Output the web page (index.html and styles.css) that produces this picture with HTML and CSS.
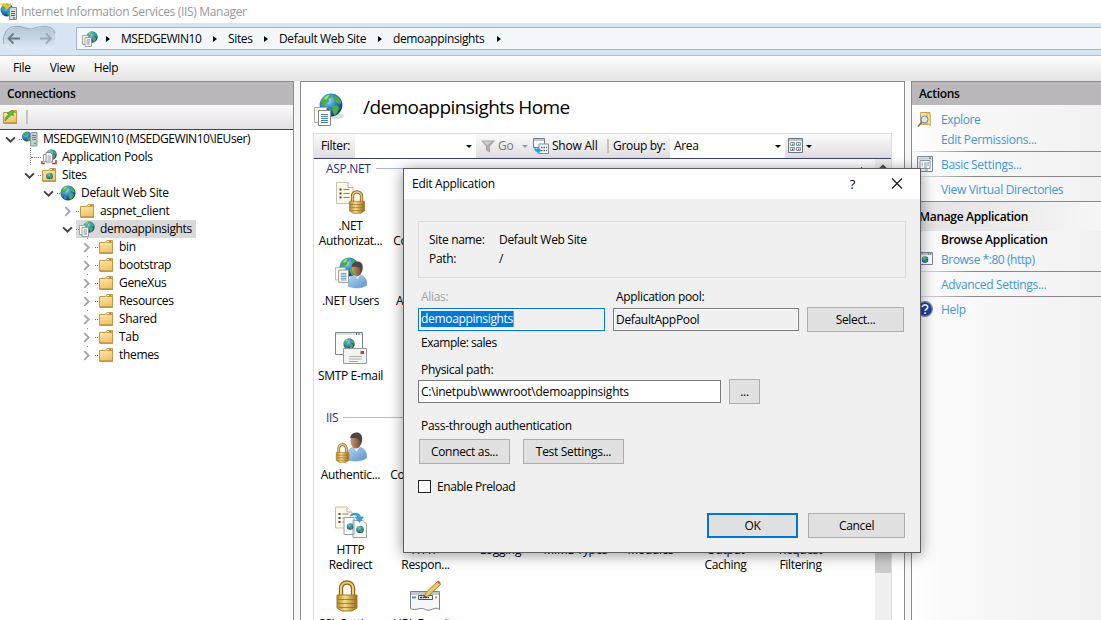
FILE: index.html
```html
<!DOCTYPE html>
<html lang="en">
<head>
<meta charset="utf-8">
<title>Internet Information Services (IIS) Manager</title>
<link rel="stylesheet" href="styles.css">
</head>
<body>
<svg class="sprite" width="0" height="0">
  <defs>
    <radialGradient id="gGlobe" cx=".38" cy=".3" r=".75"><stop offset="0" stop-color="#9fdcff"/><stop offset=".45" stop-color="#2f86d6"/><stop offset="1" stop-color="#0a2f86"/></radialGradient>
    <linearGradient id="gFolder" x1="0" y1="0" x2=".3" y2="1"><stop offset="0" stop-color="#ffeeb0"/><stop offset="1" stop-color="#efc468"/></linearGradient>
    <linearGradient id="gGold" x1="0" y1="0" x2="1" y2="0"><stop offset="0" stop-color="#b5852a"/><stop offset=".4" stop-color="#f8dc8a"/><stop offset="1" stop-color="#9a6c17"/></linearGradient>
    <linearGradient id="gShirt" x1="0" y1="0" x2="1" y2="1"><stop offset="0" stop-color="#b9d8f2"/><stop offset="1" stop-color="#5a92c8"/></linearGradient>
    <linearGradient id="gFace" x1="0" y1="0" x2="1" y2="0"><stop offset="0" stop-color="#c99a72"/><stop offset="1" stop-color="#6b452c"/></linearGradient>
    <linearGradient id="gNav" x1="0" y1="0" x2="0" y2="1"><stop offset="0" stop-color="#b5c5d8"/><stop offset=".55" stop-color="#c9d7e6"/><stop offset="1" stop-color="#e2ebf5"/></linearGradient>
  </defs>
  <symbol id="globe" viewBox="0 0 16 16">
    <circle cx="8" cy="8" r="7.6" fill="url(#gGlobe)"/>
    <path d="M2 4.5C3.6 2 6 .8 7.6 1l.8 1.6-2 1.2.4 1.8-2.2 1.6-.6 2L2 8.6C1.300 7 1.500 5.500 2 4.500zM10 2l2.500.6 2.200 3-.2 1.600-2.400-.4-1.700-1.800zM8.600 8.600l3.400-.4 1.800 1.600-1.600 3.400-2 1.800-1.300-3.200zM3.200 11l2.300.9 1 2.700-1.500-.4z" fill="#4cae3c"/>
    <path d="M3 4C4.500 2 6 1.300 7 1.400L5 4.500z" fill="#b8e6a0" opacity=".8"/>
  </symbol>
  <symbol id="pages" viewBox="0 0 10 12">
    <path d="M.5.500h6v9h-6z" fill="#fffdf2" stroke="#a5a59a"/>
    <path d="M3 2.500h6.500v9H3z" fill="#fff" stroke="#858585" stroke-width=".8"/>
    <path d="M4.500 5h3.500M4.500 7h3.500M4.500 9h3.500" stroke="#5585b5" stroke-width=".9"/>
  </symbol>
  <symbol id="bigpages" viewBox="0 0 17 19">
    <path d="M.5.500h12v15H.5z" fill="#fffdf2" stroke="#aaa99c"/>
    <path d="M4.500 3.500h12v15h-12z" fill="#fff" stroke="#858585"/>
    <path d="M7 7.500h7M7 9.500h7M7 11.500h7M7 13.500h7M7 15.500h7" stroke="#4a80b8"/>
  </symbol>
  <symbol id="app" viewBox="0 0 16 16"><use href="#globe" x="4" y="0" width="12" height="12"/><use href="#pages" x="0" y="4" width="10" height="12"/></symbol>
  <symbol id="folder" viewBox="0 0 16 16">
    <path d="M1.500 3.500h6l1.500-2h5.500v12.500h-13z" fill="url(#gFolder)" stroke="#c2994c"/>
    <path d="M8.500 3.500h6" stroke="#c2994c"/><path d="M9.500 2.500h4" stroke="#fff"/><path d="M11 2.500h2.500" stroke="#4d9be0"/>
    <path d="M1.500 14.200h13.500" stroke="#a8823a"/>
  </symbol>
  <symbol id="server" viewBox="0 0 16 16">
    <circle cx="5" cy="5.500" r="5" fill="url(#gGlobe)"/><path d="M1 4l3-3.300L6.500 2 4 5.500zM5 7l3-1 0 3-2 1.300z" fill="#43ad3b"/>
    <path d="M8.500 2.500l1.500-1h5v13.500h-6.500z" fill="#c9ced3" stroke="#8f969c"/><path d="M10 4.500h4M10 6.500h4M10 8.500h4" stroke="#6e787f"/><path d="M12 12.500h2.200" stroke="#20d020" stroke-width="1.500"/>
  </symbol>
  <symbol id="iis" viewBox="0 0 18 18">
    <circle cx="7" cy="7" r="6.500" fill="url(#gGlobe)"/><path d="M2 4l3-3 3 1-2 3-3 3zM7 9l4-2-1 5-2 1z" fill="#43b03b"/><path d="M0 1l4-1 3 2 4-2v3l-4 3-4-3z" fill="#f2c31c"/>
    <path d="M9.500 5.500l2-1h5v12h-7z" fill="#d8dbde" stroke="#858c92"/><path d="M11 8.500h4M11 10.500h4M11 12.500h4" stroke="#59646c"/><path d="M13 15h2" stroke="#20c020" stroke-width="1.500"/>
  </symbol>
  <symbol id="pools" viewBox="0 0 16 16">
    <use href="#globe" x="5" y="0" width="11" height="11"/>
    <path d="M1 12v2.500h3M15 11v3.500h-4" stroke="#c33a2c" stroke-width="1.500" fill="none"/>
    <path d="M2.500 5.500h5v7h-5z" fill="#fff" stroke="#999"/><path d="M5 3.500h4.500l2 2v7.500H5z" fill="#fff" stroke="#888"/><path d="M6.500 7h3.500M6.500 9h3.500M6.500 11h3.500" stroke="#7b93ad"/>
  </symbol>
  <symbol id="sites" viewBox="0 0 16 16"><use href="#folder" width="16" height="16"/><use href="#globe" x="5" y="5.500" width="7" height="7"/></symbol>
  <symbol id="open" viewBox="0 0 16 16"><use href="#folder" width="16" height="16"/><path d="M3 12C3 8 5 6.500 7 6L5 4 10.500 1.500 11.500 6.500 9.500 6 C7 8 6 9 3 12z" fill="#57c33a" stroke="#2f8c1c" stroke-width=".6"/></symbol>
  <symbol id="find" viewBox="0 0 16 16"><path d="M3.500 1.500h9.500v12h-9.500z" fill="url(#gFolder)" stroke="#c9a258"/><path d="M10 1l3.500 3v11L10 12z" fill="#f8dc8c" stroke="#c9a258" stroke-width=".7"/><path d="M5 11L1 15.500" stroke="#85776c" stroke-width="1.800"/><circle cx="7.500" cy="8.500" r="3.500" fill="#d5ebfb" stroke="#76858f"/></symbol>
  <symbol id="settings" viewBox="0 0 16 16"><path d="M.5.500h15v15H.5z" fill="#f4f6f7" stroke="#7e868e"/><path d="M1 2.500h14" stroke="#c5ccd3" stroke-width="2"/><path d="M12 2h2" stroke="#667"/><path d="M3 4.500h10v8H3z" fill="#fff" stroke="#8998a6"/><path d="M4.500 7h1.500M4.500 9h1.500M7 7h5M7 9h5M7 11h3" stroke="#8aa0b3"/><path d="M8 14h3" stroke="#34b9e5"/></symbol>
  <symbol id="browse" viewBox="0 0 16 16"><path d="M.5 1.500h15v12H.5z" fill="#fff" stroke="#7e868e"/><path d="M1 3h14" stroke="#c5ccd3" stroke-width="2"/><path d="M11 3h1M13 3h1" stroke="#446"/><use href="#globe" x="4.500" y="5" width="7" height="7"/></symbol>
  <symbol id="help" viewBox="0 0 16 16"><circle cx="8" cy="8" r="7.400" fill="#1e43a8" stroke="#8d9199" stroke-width="1.200"/><path d="M5.300 6.300C5.300 3 10.800 3 10.700 6.300 10.700 8 8.200 8 8.100 10" fill="none" stroke="#fff" stroke-width="1.700"/><path d="M8.100 11.300v1.800" stroke="#fff" stroke-width="1.800"/></symbol>
  <symbol id="lock" viewBox="0 0 24 32" preserveAspectRatio="xMinYMin meet">
    <path d="M6 17V8.500C6 .500 18 .500 18 8.500v8.500" fill="none" stroke="#8d651a" stroke-width="4.400"/><path d="M6 17V8.500C6 .500 18 .500 18 8.500v8.500" fill="none" stroke="#efcf77" stroke-width="2"/>
    <path d="M2 15h20v13l-5 3H7l-5-3z" fill="url(#gGold)" stroke="#a37a2a"/><path d="M3 19.500h18M3 23.500h18M4 27.500h16" stroke="#93691d" stroke-width="1.200" opacity=".75"/>
  </symbol>
  <symbol id="list" viewBox="0 0 18 22"><path d="M.5.500h11.500l5 5v16H.5z" fill="#fdf9e4" stroke="#c6c2b0"/><path d="M12 .500v5h5" fill="#fff" stroke="#b5b09c"/><path d="M3.500 7.500h2M3.500 11.500h2M3.500 15.500h2" stroke="#444" stroke-width="2"/><path d="M7.500 7.500h6M7.500 11.500h6M7.500 15.500h6" stroke="#7b7ba4"/></symbol>
  <symbol id="user" viewBox="0 0 20 30">
    <path d="M0 27C0 19 4 16 7 16h7c4 1 6 5 6 10-5 4-14 4-20 1z" fill="url(#gShirt)" stroke="#7ba2c9" stroke-width=".6"/><path d="M7 15l3 5 4-6z" fill="#eef5fb"/><ellipse cx="9.500" cy="9.500" rx="5.300" ry="7.500" fill="url(#gFace)"/><path d="M4 7C4 0 15.500-1 15.500 7c0 4-1 5-1.500 6-.5-5-3-7-10-6z" fill="#4a4643"/>
  </symbol>
  <symbol id="auth-rules" viewBox="0 0 32 32"><use href="#list" x="1" y="0" width="18" height="22"/><use href="#lock" x="13" y="8" width="18" height="24"/></symbol>
  <symbol id="net-users" viewBox="0 0 32 32"><use href="#globe" x="4" y="0" width="20" height="20"/><use href="#bigpages" x="0" y="10" width="14" height="16"/><use href="#user" x="13" y="3" width="19" height="29"/></symbol>
  <symbol id="smtp" viewBox="0 0 32 32"><path d="M.5.500h27v22H.5z" fill="#fff" stroke="#80868c"/><path d="M1 2h26" stroke="#dde2e8" stroke-width="2"/><path d="M21 2h1M23.500 2h1" stroke="#345" stroke-width="1.500"/><use href="#globe" x="8" y="6" width="12" height="12"/><path d="M8.500 16.500h23v15h-23z" fill="#f4f4f2" stroke="#999"/><path d="M14 24.500h13M14 27h13M14 29.500h9" stroke="#aaa"/><path d="M25.500 19h3.500v3h-3.500z" fill="#e23528"/></symbol>
  <symbol id="authn" viewBox="0 0 32 32"><use href="#user" x="11" y="0" width="21" height="31"/><use href="#lock" x="0" y="12" width="15" height="20"/></symbol>
  <symbol id="redirect" viewBox="0 0 32 32"><use href="#list" x="0" y="0" width="18" height="23"/><path d="M9 11.500h10v17H9zM18 14.500h10l3.500 3.500v13.500H18z" fill="#fff" stroke="#9aa0a6"/><use href="#globe" x="11.500" y="17" width="7" height="7"/><use href="#globe" x="21" y="19.500" width="8" height="8"/><path d="M15 10C17 6 25 6 25.500 11H28.500L24.500 16.500 20 11H22.500C22 8.500 18 8.500 15 10z" fill="#36a5dd" stroke="#1b79b0" stroke-width=".5"/></symbol>
  <symbol id="rewrite" viewBox="0 0 32 32"><path d="M.5 11.500h29v18c-5-4-9 3-14 0-5-3-10 2-15-1z" fill="#f5f7f8" stroke="#7b838a"/><path d="M1 13.500h28" stroke="#bfc6cc" stroke-width="3"/><path d="M8.500 15.500h14v4h-14z" fill="#fff" stroke="#555"/><path d="M10 17.500h9" stroke="#222" stroke-width="1.500" stroke-dasharray="2 .6"/><path d="M2 17.500h4" stroke="#5a8dc9" stroke-width="2"/><path d="M25 16.500h2v2h-2z" fill="#e2962b"/><path d="M14 17.500l2-5L27.500 1.500l3 3L19 15.500z" fill="#f0c75c" stroke="#8c6d2d" stroke-width=".8"/><path d="M27 2l1.500-1.500 2.500 2.500-1.500 1.500z" fill="#cc6257"/><path d="M14 17.500l.7-2 1.300 1z" fill="#333"/></symbol>
  <symbol id="funnel" viewBox="0 0 16 16"><path d="M1 2.500h14L10 8.500v6l-4-2v-4z" fill="#aaa"/><path d="M3 3.500h9l-5 4z" fill="#ccc"/></symbol>
  <symbol id="showall" viewBox="0 0 16 16"><path d="M.5.500h11v9H.5z" fill="#f7f9fb" stroke="#727f8c"/><path d="M1 2h10" stroke="#b9c7d5" stroke-width="2"/><path d="M6 6h9.500v9.500H6z" fill="#fff" stroke="#7d8b99"/><path d="M8 9.500h6M8 12.500h6" stroke="#39599a" stroke-width="1.700" stroke-dasharray="1.500 1"/><path d="M1.500 7c0 3 1 4 3 4V9l4 3.500-4 3.500v-2c-3 0-4-3-3-7z" fill="#2e9fdc"/></symbol>
  <symbol id="viewmode" viewBox="0 0 16 16"><path d="M.5.500h14v14H.5z" fill="#fff" stroke="#68737e"/><path d="M1 2h13" stroke="#b9c3cd" stroke-width="2"/><g fill="#fff" stroke="#8d979f"><path d="M2.500 4.500h4v3h-4zM8.500 4.500h4v3h-4zM2.500 9.500h4v3h-4zM8.500 9.500h4v3h-4z"/></g><path d="M4 5.500h1.500v1.500H4z" fill="#54a354"/><path d="M10 5.500h1.500v1.500H10z" fill="#3d9fd5"/><path d="M4 10.500h1.500v1.500H4z" fill="#5046c8"/><path d="M10 10.500h1.500v1.500H10z" fill="#d5604a"/></symbol>
  <symbol id="down" viewBox="0 0 10 10"><path d="M1 3l4 4 4-4" fill="none" stroke="#404040" stroke-width="1.700"/></symbol>
  <symbol id="right" viewBox="0 0 10 10"><path d="M3 1l4 4-4 4" fill="none" stroke="#a6a6a6" stroke-width="1.700"/></symbol>
</svg>

<div class="window">
  <header class="titlebar"><svg class="logo"><use href="#iis"/></svg><span>Internet Information Services (IIS) Manager</span></header>

  <div class="address">
    <svg class="navpad" viewBox="0 0 56 28"><path d="M12 1.500C20 0 23 4 28 4s9-4 17-2.500C58 4 57 24 46 25c-7 1-12-2-18-2s-11 3-18 2C-1 23-1 4 12 1.500z" fill="url(#gNav)" stroke="#dfe8f2" stroke-width="1.500"/><path d="M2 19C0 10 5 2.500 12 1.500 20 .500 23 4 28 4s9-4 17-2.500c4 .800 7 3 8 7" fill="none" stroke="#9aabc0" stroke-width="1.200"/><path d="M18 13.500H6.500m5-5l-5 5 5 5" fill="none" stroke="#6f7a86" stroke-width="1.800"/><path d="M38 13.500h11m-5-5l5 5-5 5" fill="none" stroke="#99a8b8" stroke-width="1.800"/></svg>
    <nav class="crumbs">
      <svg class="i16"><use href="#app"/></svg><i class="tri"></i>
      <span class="c1">MSEDGEWIN10</span><i class="tri"></i>
      <span class="c2">Sites</span><i class="tri"></i>
      <span class="c3">Default Web Site</span><i class="tri"></i>
      <span class="c4">demoappinsights</span><i class="tri"></i>
    </nav>
  </div>

  <nav class="menu"><span>File</span><span>View</span><span>Help</span></nav>

  <main class="body">
    <section class="left">
      <h2 class="head">Connections</h2>
      <div class="lefttools"><svg class="i16"><use href="#open"/></svg><i class="sep"></i></div>
      <ul class="tree">
        <li class="l0"><svg class="chev"><use href="#down"/></svg><i class="dots"></i><svg class="i16"><use href="#server"/></svg><span class="wide">MSEDGEWIN10 (MSEDGEWIN10\IEUser)</span></li>
        <li class="l1 branch"><i class="chev"></i><i class="dots"></i><svg class="i16"><use href="#pools"/></svg><span>Application Pools</span></li>
        <li class="l1"><svg class="chev"><use href="#down"/></svg><i class="dots"></i><svg class="i16"><use href="#sites"/></svg><span>Sites</span></li>
        <li class="l2"><svg class="chev"><use href="#down"/></svg><i class="dots"></i><svg class="i16"><use href="#globe"/></svg><span>Default Web Site</span></li>
        <li class="l3"><svg class="chev"><use href="#right"/></svg><i class="dots"></i><svg class="i16"><use href="#folder"/></svg><span>aspnet_client</span></li>
        <li class="l3"><svg class="chev"><use href="#down"/></svg><div class="picked"><i class="dots"></i><svg class="i16"><use href="#app"/></svg><span>demoappinsights</span></div></li>
        <li class="l4"><svg class="chev"><use href="#right"/></svg><i class="dots"></i><svg class="i16"><use href="#folder"/></svg><span>bin</span></li>
        <li class="l4"><svg class="chev"><use href="#right"/></svg><i class="dots"></i><svg class="i16"><use href="#folder"/></svg><span>bootstrap</span></li>
        <li class="l4"><svg class="chev"><use href="#right"/></svg><i class="dots"></i><svg class="i16"><use href="#folder"/></svg><span>GeneXus</span></li>
        <li class="l4"><svg class="chev"><use href="#right"/></svg><i class="dots"></i><svg class="i16"><use href="#folder"/></svg><span>Resources</span></li>
        <li class="l4"><svg class="chev"><use href="#right"/></svg><i class="dots"></i><svg class="i16"><use href="#folder"/></svg><span>Shared</span></li>
        <li class="l4"><svg class="chev"><use href="#right"/></svg><i class="dots"></i><svg class="i16"><use href="#folder"/></svg><span>Tab</span></li>
        <li class="l4"><svg class="chev"><use href="#right"/></svg><i class="dots"></i><svg class="i16"><use href="#folder"/></svg><span>themes</span></li>
      </ul>
    </section>

    <section class="center">
      <div class="home"><svg viewBox="0 0 32 34"><ellipse cx="21" cy="23" rx="9" ry="3" fill="#ddd"/><use href="#globe" x="5" y="0" width="24" height="24"/><use href="#bigpages" x="0" y="14" width="17" height="19"/></svg><h1>/demoappinsights Home</h1></div>
      <div class="features">
        <div class="filter">
          <span class="flabel">Filter:</span><span class="combo f1"><i class="drop"></i></span>
          <svg class="i16"><use href="#funnel"/></svg><span class="go">Go</span><i class="drop pale"></i>
          <svg class="i16"><use href="#showall"/></svg><span class="show">Show All</span><i class="sep"></i>
          <span class="group">Group by:</span><span class="combo f2">Area<i class="drop"></i></span>
          <svg class="i16 vm"><use href="#viewmode"/></svg><i class="drop"></i>
        </div>
        <div class="scroll">
          <div class="list">
            <div class="section"><span>ASP.NET</span><hr><svg class="fold" viewBox="0 0 9 6"><path d="M0 5.500L4.500 1 9 5.500z" fill="#1e3287"/></svg></div>
            <div class="grid">
              <div class="item"><svg><use href="#auth-rules"/></svg><span>.NET<br>Authorizat...</span></div>
              <div class="item"><svg></svg><span>.NET<br>Compilation</span></div>
            </div>
            <div class="grid">
              <div class="item"><svg><use href="#net-users"/></svg><span>.NET Users</span></div>
              <div class="item"><svg></svg><span>Application<br>Settings</span></div>
            </div>
            <div class="grid"><div class="item"><svg><use href="#smtp"/></svg><span>SMTP E-mail</span></div></div>
            <div class="section second"><span>IIS</span><hr></div>
            <div class="grid">
              <div class="item"><svg><use href="#authn"/></svg><span>Authentic...</span></div>
              <div class="item"><svg></svg><span>Compression</span></div>
            </div>
            <div class="grid">
              <div class="item"><svg><use href="#redirect"/></svg><span>HTTP<br>Redirect</span></div>
              <div class="item"><svg></svg><span>HTTP<br>Respon...</span></div>
              <div class="item"><svg></svg><span>Logging</span></div>
              <div class="item"><svg></svg><span>MIME Types</span></div>
              <div class="item"><svg></svg><span>Modules</span></div>
              <div class="item"><svg></svg><span>Output<br>Caching</span></div>
              <div class="item"><svg></svg><span>Request<br>Filtering</span></div>
            </div>
            <div class="grid last">
              <div class="item"><svg><use href="#lock"/></svg><span>SSL Settings</span></div>
              <div class="item"><svg><use href="#rewrite"/></svg><span>URL Rewrite</span></div>
            </div>
          </div>
          <div class="bar"><svg class="up" viewBox="0 0 16 17"><path d="M3.500 11.500l4.500-4.500 4.500 4.500" fill="none" stroke="#505050" stroke-width="2.400"/></svg><div class="thumb"></div></div>
        </div>
      </div>
    </section>

    <aside class="right">
      <h2 class="head">Actions</h2>
      <div class="acts">
        <div class="act a1"><svg class="i16"><use href="#find"/></svg><span>Explore</span></div>
        <div class="act a2"><span>Edit Permissions...</span></div>
        <div class="act rule"><svg class="i16"><use href="#settings"/></svg><span>Basic Settings...</span></div>
        <div class="act rule"><span>View Virtual Directories</span></div>
        <div class="subhead"><span>Manage Application</span></div>
        <div class="act bold"><span>Browse Application</span></div>
        <div class="act a3"><svg class="i16"><use href="#browse"/></svg><span>Browse *:80 (http)</span></div>
        <div class="act rule"><span>Advanced Settings...</span></div>
        <div class="act rule"><svg class="i16"><use href="#help"/></svg><span>Help</span></div>
      </div>
    </aside>
  </main>

  <div class="dialog">
    <div class="dtitle"><span>Edit Application</span><b>?</b><svg viewBox="0 0 12 12"><path d="M1 .500l10 10M11 .500L1 10.500" stroke="#111" stroke-width="1.100"/></svg></div>
    <div class="dbody">
      <div class="info"><span>Site name:</span><span>Default Web Site</span><span>Path:</span><span>/</span></div>
      <div class="labels"><span class="off">Alias:</span><span>Application pool:</span></div>
      <div class="row"><div class="input alias"><mark>demoappinsights</mark></div><div class="input pool">DefaultAppPool</div><button class="btn select">Select...</button></div>
      <div class="text example">Example: sales</div>
      <div class="text phys">Physical path:</div>
      <div class="row"><div class="input path">C:\inetpub\wwwroot\demoappinsights</div><button class="btn dotsbtn">...</button></div>
      <div class="text pass">Pass-through authentication</div>
      <div class="row pair"><button class="btn connect">Connect as...</button><button class="btn test">Test Settings...</button></div>
      <label class="check"><i></i><span>Enable Preload</span></label>
      <div class="footer"><button class="btn ok">OK</button><button class="btn cancel">Cancel</button></div>
    </div>
  </div>
</div>
</body>
</html>
```

FILE: styles.css
```css
* { box-sizing: border-box; }
body { margin: 0; font: 12px/16px "Open Sans", "Noto Sans", sans-serif; letter-spacing: -0.32px; color: #000; }
h1, h2, ul { margin: 0; padding: 0; font-weight: normal; list-style: none; }
svg { display: block; flex: none; }
i { display: block; flex: none; }
span { white-space: nowrap; }
.sprite { position: absolute; }
.i16 { width: 16px; height: 16px; }
.window { width: 1101px; height: 620px; overflow: hidden; position: relative; display: flex; flex-direction: column; background: #f7f7f7; }

.titlebar { height: 23px; background: #fff; display: flex; align-items: center; color: #999; gap: 3px; flex: none; letter-spacing: -0.32px; }
.titlebar span { padding-top: 1px; }
.logo { width: 18px; height: 18px; }

.address { height: 33px; flex: none; background: #d7e4f2; border-bottom: 1px solid #b5bfca; display: flex; align-items: flex-start; }
.navpad { width: 56px; height: 28px; margin: 2px 18px 0 2px; }
.crumbs { flex: 1; height: 23px; margin-top: 4px; border: 1px solid #a7b4c4; border-right: 0; background: #f4f8fd; display: flex; align-items: center; padding-left: 5px; letter-spacing: -0.36px; }
.tri { width: 0; height: 0; border: 3.5px solid transparent; border-left: 4px solid #000; border-right: 0; margin: 0 11px; }
.crumbs .i16 + .tri { margin-left: 8px; }
.c1 { width: 81px; letter-spacing: -0.45px; }
.c2 { width: 25px; }
.c3 { width: 88px; }
.c4 { width: 93px; }

.menu { height: 25px; flex: none; background: linear-gradient(#fdfdfd, #e4e4e4); display: flex; gap: 19px; padding: 4px 13px; }

.body { flex: 1; min-height: 0; display: flex; background: #f7f7f7; }
.left { width: 294px; border-top: 1px solid #8a8a8a; border-right: 1px solid #8a8a8a; background: #fff; flex: none; }
.head { height: 23px; background: #bab8bb; font-size: 12px; font-weight: 600; line-height: 23px; padding-left: 7px; }
.lefttools { height: 25px; border-bottom: 1px solid #3d3f6e; background: linear-gradient(#fafafa, #e3e1e3); display: flex; align-items: center; padding-left: 2px; gap: 8px; }
.sep { width: 2px; height: 14px; background: #c5c5b4; }
.tree li { height: 18px; display: flex; align-items: center; }
.tree .l0 { padding-left: 5px; }
.tree .l1 { padding-left: 24px; }
.tree .l2 { padding-left: 43px; }
.tree .l3 { padding-left: 62px; }
.tree .l4 { padding-left: 81px; background: linear-gradient(#888, #888) 87px 0 / 1px 1px no-repeat; }
.tree .chev { width: 11px; height: 11px; margin-right: 3px; }
.tree .dots { width: 3px; border-top: 1px dotted #777; }
.tree .i16 { margin-right: 5px; }
.tree .branch { background: repeating-linear-gradient(#888 0 1px, #fff 1px 2px) 30px 0 / 1px 18px no-repeat; }
.tree .branch .chev { margin-right: -4px; }
.tree .branch .dots { width: 10px; }
.wide { letter-spacing: -0.45px; }
.picked { height: 18px; display: flex; align-items: center; background: #d9d9d9; padding-right: 4px; }

.center { width: 605px; margin-left: 6px; border: 1px solid #8a8a8a; border-bottom: 0; background: #fff; padding: 0 12px; flex: none; display: flex; flex-direction: column; }
.home { height: 51px; flex: none; display: flex; padding-top: 11px; }
.home svg { width: 32px; height: 34px; margin-left: 1px; }
.home h1 { font-size: 19px; line-height: 29px; margin-left: 17px; letter-spacing: -0.58px; }
.features { flex: 1; min-height: 0; border: 1px solid #dedede; border-bottom: 0; display: flex; flex-direction: column; }
.filter { height: 25px; flex: none; border-bottom: 1px solid #3d3f6e; background: linear-gradient(#fbfbfb, #dfdde0); display: flex; align-items: center; }
.flabel { width: 41px; padding-left: 7px; }
.combo { height: 23px; background: #fff; display: flex; align-items: center; justify-content: space-between; padding: 0 4px; line-height: 24px; }
.f1 { width: 121px; margin-right: 4px; justify-content: flex-end; }
.f2 { width: 115px; margin-right: 3px; }
.drop { width: 0; height: 0; border: 3px solid transparent; border-top: 3px solid #000; border-bottom: 0; }
.pale { border-top-color: #999; margin: 0 5px 0 8px; }
.go { width: 16px; margin-left: 2px; color: #777; }
.show { width: 47px; margin: 0 8px 0 3px; letter-spacing: -0.22px; }
.group { width: 53px; margin: 0 4px 0 4px; }
.vm + .drop { margin-left: 2px; }
.scroll { flex: 1; min-height: 0; display: flex; }
.list { flex: 1; overflow: hidden; height: 461px; }
.section { height: 19px; display: flex; align-items: center; padding-left: 12px; color: #1e3287; gap: 5px; }
.section hr { flex: 1; border: 0; border-top: 1px solid #a9b9dc; margin: 0; }
.fold { width: 9px; height: 6px; margin: 0 9px 0 0; }
.second { margin-top: 5px; }
.second hr { margin-right: 10px; }
.grid { height: 75px; display: flex; margin-left: -1px; }
.item { width: 75px; flex: none; display: flex; flex-direction: column; align-items: center; text-align: center; line-height: 15px; padding-top: 4px; }
.item svg { width: 32px; height: 32px; margin: 0 0 4px; }
.last .item { padding-top: 3px; }
.bar { width: 16px; height: 461px; background: #f0f0f0; display: flex; flex-direction: column; flex: none; }
.up { width: 16px; height: 17px; }
.thumb { height: 397px; background: #cdcdcd; }

.right { flex: 1; margin-left: 6px; border-top: 1px solid #8a8a8a; border-left: 1px solid #8a8a8a; background: linear-gradient(90deg, #fff, #fafafa 30px, #f1f1f1); min-width: 0; }
.act { height: 25px; display: flex; align-items: center; color: #3f97d8; padding: 2px 0 0 29px; }
.act .i16 { margin: -2px 8px 0 -24px; }
.a1 { height: 25px; padding-top: 4px; letter-spacing: -0.4px; }
.a2 { height: 21px; padding: 0 0 2px 29px; }
.a3 { height: 20px; padding: 0 0 2px 29px; letter-spacing: -0.45px; }
.rule { background: linear-gradient(90deg, #eee, #8a8a8a 60px) 0 0 / 100% 1px no-repeat; }
.subhead { height: 30px; font-weight: 600; padding: 7px 0 0 7px; border-top: 1px solid #8a8a8a; background: linear-gradient(90deg, #e3e1e3, #f6f6f6); }
.bold { height: 20px; color: #000; font-weight: 600; padding: 0 0 2px 29px; letter-spacing: -0.28px; }

.dialog { position: absolute; left: 403px; top: 168px; width: 518px; height: 385px; border: 1px solid #5c5d62; background: #f0f0f0; box-shadow: 0 2px 14px rgba(0,0,0,.42); display: flex; flex-direction: column; }
.dtitle { height: 30px; flex: none; background: #fff; display: flex; align-items: center; padding: 0 17px 0 8px; }
.dtitle span { flex: 1; letter-spacing: -0.27px; }
.dtitle b { font-weight: 400; font-size: 13px; margin-right: 36px; }
.dtitle svg { width: 12px; height: 12px; }
.dbody { padding: 22px 14px 0; }
.info { height: 57px; width: 488px; border: 1px solid #dcdcdc; display: grid; grid-template: 19px 20px / 70px 1fr; padding: 8px 10px; align-items: center; }
.labels { display: grid; grid-template-columns: 195px 1fr; padding-left: 3px; margin-top: 11px; height: 18px; }
.off { color: #a3a3a3; }
.row { display: flex; height: 25px; align-items: center; }
.input { height: 23px; border: 1px solid #7a7a7a; padding: 2px; line-height: 17px; white-space: nowrap; box-shadow: inset 0 0 0 1px #fff; }
.alias { width: 187px; border-color: #0078d7; margin-right: 8px; }
.alias mark { display: block; width: max-content; height: 16px; line-height: 16px; background: #0078d7; color: #fff; border-right: 1px solid #f08030; }
.pool { width: 186px; margin-right: 8px; }
.btn { height: 25px; margin: 0; padding: 0; border: 1px solid #adadad; background: #e1e1e1; font: inherit; letter-spacing: inherit; color: #000; border-radius: 0; }
.select { width: 97px; }
.text { padding-left: 3px; height: 16px; }
.example { margin-top: 3px; letter-spacing: -0.45px; }
.phys { margin-top: 11px; margin-bottom: 1px; }
.path { width: 303px; background: #fff; margin-right: 8px; letter-spacing: -0.23px; }
.dotsbtn { width: 31px; }
.pass { margin: 14px 0 5px; letter-spacing: -0.29px; }
.pair { padding-left: 1px; gap: 13px; }
.connect { width: 91px; }
.test { width: 101px; }
.check { display: flex; align-items: center; gap: 6px; margin-top: 14px; height: 16px; letter-spacing: -0.42px; }
.check i { width: 13px; height: 13px; border: 1px solid #222; background: #fff; }
.check span { padding-top: 1px; }
.footer { display: flex; gap: 10px; justify-content: flex-end; margin-top: 19px; padding-right: 1px; }
.ok { width: 91px; border: 2px solid #0078d7; }
.cancel { width: 97px; }
```
